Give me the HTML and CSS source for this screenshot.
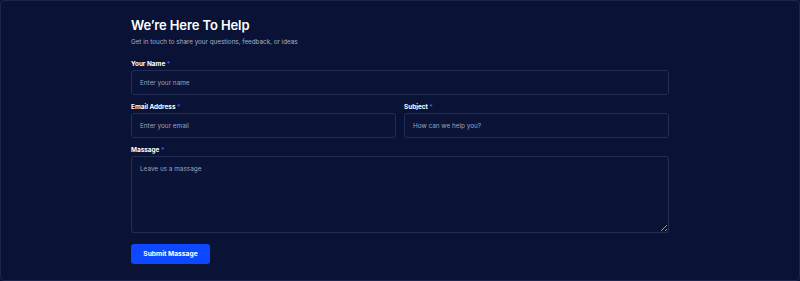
FILE: index.html
```html
<!DOCTYPE html>
<html lang="en">
<head>
  <meta charset="UTF-8">
  <meta name="viewport" content="width=device-width, initial-scale=1.0">
  <title>Contact</title>
  <link rel="stylesheet" href="styles.css">
</head>
<body>
  <div class="page">
    <form class="contact">
      <h1>We’re Here To Help</h1>
      <p class="intro">Get in touch to share your questions, feedback, or ideas</p>
      <div class="field">
        <label>Your Name <span class="req">*</span></label>
        <input type="text" placeholder="Enter your name">
      </div>
      <div class="row">
        <div class="field">
          <label>Email Address <span class="req">*</span></label>
          <input type="email" placeholder="Enter your email">
        </div>
        <div class="field">
          <label>Subject <span class="req">*</span></label>
          <input type="text" placeholder="How can we help you?">
        </div>
      </div>
      <div class="field">
        <label>Massage <span class="req">*</span></label>
        <textarea placeholder="Leave us a massage"></textarea>
      </div>
      <button type="button">Submit Massage</button>
    </form>
  </div>
</body>
</html>
```

FILE: styles.css
```css
html, body {
  margin: 0;
  padding: 0;
  background-color: #0a1336;
}
body {
  font-family: Inter, "Noto Sans", sans-serif;
  color: #fff;
}
.page {
  box-sizing: border-box;
  height: 281px;
  border: 1px solid #1b2550;
  border-radius: 4px;
  padding-top: 13px;
}
.contact {
  width: 538px;
  margin-left: 130px;
}
h1 {
  margin: 0;
  font-size: 13px;
  font-weight: 600;
  letter-spacing: -0.1px;
  line-height: 22px;
}
.intro {
  margin: 0 0 12px;
  font-size: 6.3px;
  color: #a9b0c8;
  line-height: 12px;
}
.field {
  display: flex;
  flex-direction: column;
  margin-bottom: 8px;
}
label {
  font-size: 6.4px;
  font-weight: 700;
  line-height: 8px;
  margin-bottom: 2px;
}
.req {
  color: #3c5bff;
}
.row {
  display: flex;
  gap: 8px;
}
.row .field {
  flex: 1;
}
input, textarea {
  box-sizing: border-box;
  background: #0b1436;
  border: 1px solid #222d57;
  border-radius: 3px;
  color: #fff;
  font-family: inherit;
  font-size: 6.4px;
  padding: 0 8px;
  outline: none;
}
input {
  height: 25px;
}
textarea {
  height: 77px;
  padding-top: 8px;
  resize: vertical;
}
::placeholder {
  color: #9ba3bd;
}
button {
  display: block;
  margin-top: 11px;
  width: 79px;
  height: 20px;
  background-color: #0b48ff;
  color: #fff;
  border: none;
  border-radius: 3px;
  font-family: inherit;
  font-size: 6.7px;
  font-weight: 700;
  cursor: pointer;
}
```
